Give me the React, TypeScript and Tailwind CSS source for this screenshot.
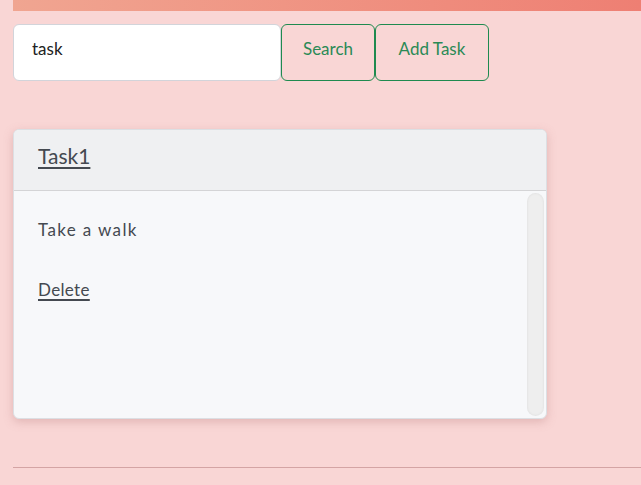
export default function App() {
  return (
    <div className="min-h-[485px] bg-[#f9d6d5] pl-[13px] pb-4 font-['Lato','Open_Sans',sans-serif] text-[#444950]">
      <div className="h-[11px] bg-gradient-to-r from-[#f0a591] to-[#ee7f73]" />

      <div className="mt-[13px] flex h-[57px]">
        <input
          defaultValue="task"
          className="w-[268px] rounded-md border border-[#d2d4da] bg-white px-[18px] pb-2 text-[17px] text-[#222] outline-none"
        />
        <button className="w-[94px] rounded-md border border-[#1f8a4f] pb-2 text-[17px] text-[#2b8a55]">
          Search
        </button>
        <button className="w-[114px] rounded-md border border-[#1f8a4f] pb-2 text-[17px] text-[#2b8a55]">
          Add Task
        </button>
      </div>

      <div className="mt-[48px] flex h-[290px] w-[534px] flex-col overflow-hidden rounded-md border border-[#dcdfe3] bg-[#f7f8fa] shadow-[0_3px_10px_rgba(180,120,120,0.35)]">
        <div className="flex h-[61px] shrink-0 items-center border-b border-[#d4d4d6] bg-[#eff0f2] px-6 pb-2">
          <a href="#" className="text-[21px] text-[#444950] underline decoration-2 underline-offset-[3px]">
            Task1
          </a>
        </div>
        <div className="flex min-h-0 flex-1 pb-[2px] pt-[2px]">
          <div className="flex-1 px-6 pt-[24px]">
            <p className="text-[17px] tracking-[0.08em]">Take a walk</p>
            <a href="#" className="mt-[34px] inline-block text-[17px] tracking-[0.02em] text-[#444950] underline decoration-2 underline-offset-[3px]">
              Delete
            </a>
          </div>
          <div className="mr-[2px] w-[17px] rounded-full bg-[#eeeeee] shadow-[inset_0_0_3px_rgba(0,0,0,0.08)]" />
        </div>
      </div>

      <hr className="mt-[48px] border-t border-[#d4a4a4]" />
    </div>
  );
}
